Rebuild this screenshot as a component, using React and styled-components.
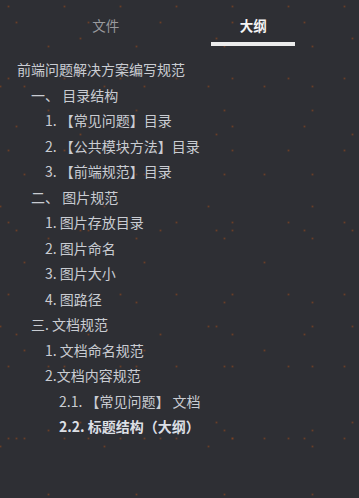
import React from "react";
import styled, { createGlobalStyle } from "styled-components";

const dot = (x, y) =>
  `radial-gradient(circle at ${x}px ${y}px, rgba(130,70,38,0.7) 0, rgba(110,60,34,0.35) 1px, rgba(46,47,52,0) 1.8px)`;

const GlobalStyle = createGlobalStyle`
  html, body {
    margin: 0;
    padding: 0;
    background-color: #2e2f34;
  }
  body {
    font-family: "Noto Sans CJK SC", "Noto Sans", sans-serif;
    min-height: 498px;
  }
  * { box-sizing: border-box; }
`;

const Page = styled.div`
  min-height: 498px;
  background-color: #2e2f34;
  background-image: ${dot(8.5, 6.5)}, ${dot(24.5, 30.5)}, ${dot(48.5, 14.5)}, ${dot(16.5, 46.5)},
    ${dot(40.5, 62.5)}, ${dot(64.5, 38.5)};
  background-size: 56px 72px, 88px 64px, 72px 104px, 120px 88px, 104px 120px, 136px 96px;
  background-position: 0 0, 24px 16px, 40px 8px, 8px 40px, 64px 24px, 16px 0;
`;

const Tabs = styled.nav`
  display: flex;
  justify-content: space-evenly;
`;

const Tab = styled.div`
  width: 84px;
  display: flex;
  flex-direction: column;
  align-items: center;
  padding-top: 15px;
`;

const TabLabel = styled.span`
  font-size: 13.5px;
  line-height: 20px;
  height: 20px;
  color: ${(p) => (p.$active ? "#f4f4f4" : "#9a9a9e")};
  font-weight: ${(p) => (p.$active ? 700 : 400)};
`;

const Underline = styled.div`
  margin-top: 7px;
  width: 100%;
  height: 4px;
  background: ${(p) => (p.$active ? "#ececec" : "transparent")};
`;

const Outline = styled.ul`
  list-style: none;
  margin: 11px 0 0;
  padding: 0;
`;

const Item = styled.li`
  height: 25.5px;
  line-height: 25.5px;
  font-size: 14px;
  white-space: nowrap;
  padding-left: ${(p) => 17 + p.$level * 14}px;
  color: ${(p) => (p.$bold ? "#dcdfe5" : "#c9ccd2")};
  font-weight: ${(p) => (p.$bold ? 700 : 400)};
`;

const items = [
  { level: 0, text: "前端问题解决方案编写规范" },
  { level: 1, text: "一、 目录结构" },
  { level: 2, text: "1. 【常见问题】目录" },
  { level: 2, text: "2. 【公共模块方法】目录" },
  { level: 2, text: "3. 【前端规范】目录" },
  { level: 1, text: "二、 图片规范" },
  { level: 2, text: "1. 图片存放目录" },
  { level: 2, text: "2. 图片命名" },
  { level: 2, text: "3. 图片大小" },
  { level: 2, text: "4. 图路径" },
  { level: 1, text: "三. 文档规范" },
  { level: 2, text: "1. 文档命名规范" },
  { level: 2, text: "2.文档内容规范" },
  { level: 3, text: "2.1. 【常见问题】 文档" },
  { level: 3, text: "2.2. 标题结构（大纲）", bold: true },
];

export default function App() {
  return (
    <>
      <GlobalStyle />
      <Page>
        <Tabs>
          <Tab>
            <TabLabel>文件</TabLabel>
            <Underline />
          </Tab>
          <Tab>
            <TabLabel $active>大纲</TabLabel>
            <Underline $active />
          </Tab>
        </Tabs>
        <Outline>
          {items.map((it, i) => (
            <Item key={i} $level={it.level} $bold={it.bold}>
              {it.text}
            </Item>
          ))}
        </Outline>
      </Page>
    </>
  );
}
